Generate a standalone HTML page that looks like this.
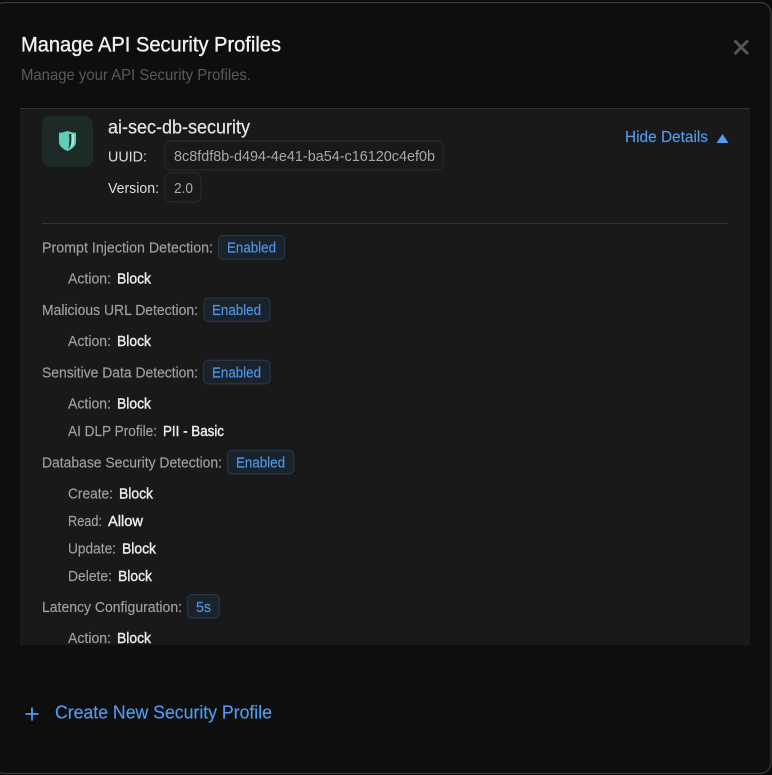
<!DOCTYPE html>
<html lang="en">
<head>
<meta charset="utf-8">
<title>Manage API Security Profiles</title>
<style>
html,body{margin:0;padding:0;background:#0b0b0b;width:772px;height:775px;overflow:hidden}
svg{display:block;position:absolute;left:0;top:0}
text{font-family:"Liberation Sans",sans-serif;font-size:15px;white-space:pre}
.l{fill:#a0a0a0;stroke:#a0a0a0;stroke-width:.15}
.b{fill:#ececec;stroke:#ececec;stroke-width:.4}
.c{fill:#4f97e8;stroke:#4f97e8;stroke-width:.15;font-size:15px}
.chip{fill:#1a222c;stroke:#263648;stroke-width:1.2}
.g{fill:#191919;stroke:#2a2a2a;stroke-width:1.2}
</style>
</head>
<body>
<svg width="772" height="775" viewBox="0 0 772 775" xmlns="http://www.w3.org/2000/svg">
<defs><clipPath id="p"><rect x="20" y="108" width="730" height="537"/></clipPath></defs>
<rect x="0" y="0" width="772" height="775" fill="#0b0b0b"/>
<rect x="-6" y="2.5" width="777" height="771" rx="11" fill="#0e0e0e" stroke="#3a3a3a" stroke-width="1.2"/>

<text x="21" y="51.5" style="font-size:21px;stroke:#f2f2f2;stroke-width:.35" fill="#f2f2f2" textLength="260" lengthAdjust="spacingAndGlyphs">Manage API Security Profiles</text>
<text x="21" y="80" style="font-size:16px" fill="#5a5a5a" textLength="230" lengthAdjust="spacingAndGlyphs">Manage your API Security Profiles.</text>
<path d="M734.5 40.5 L748 54 M748 40.5 L734.5 54" stroke="#565656" stroke-width="3" fill="none"/>

<rect x="20" y="108" width="730" height="537" fill="#191919"/>
<rect x="20" y="108" width="730" height="1" fill="#333333"/>

<rect x="42" y="116" width="51" height="51" rx="8" fill="#1c2a28"/>
<path d="M67.5 131 C70.5 132 73.5 132.7 76 132.7 V142 C76 146 72 149 67.5 151 C63 149 59 146 59 142 V132.7 C61.5 132.7 64.5 132 67.5 131 Z" fill="#5fcdb9"/>
<path d="M71 134 C72 134.3 73 134.5 74 134.6 V142 C74 144.5 72 146.8 69.5 148 C71 145 71.3 141 71 134 Z" fill="#a8e6da"/>
<path d="M69.2 134 H71.3 V141 C71.3 144 70.6 146.5 68.4 148.8 C69.6 144.5 69.6 139 69.2 134 Z" fill="#12201e"/>

<text x="108" y="133.5" style="font-size:19px;stroke:#e6e6e6;stroke-width:.2" fill="#e6e6e6" textLength="142" lengthAdjust="spacingAndGlyphs">ai-sec-db-security</text>
<text x="108" y="161.5" fill="#dddddd" textLength="39" lengthAdjust="spacingAndGlyphs">UUID:</text>
<rect x="165" y="141" width="278" height="29" rx="6" class="g"/>
<text x="174" y="161" fill="#a8a8a8" textLength="261" lengthAdjust="spacingAndGlyphs">8c8fdf8b-d494-4e41-ba54-c16120c4ef0b</text>
<text x="108" y="193" fill="#dddddd" textLength="51" lengthAdjust="spacingAndGlyphs">Version:</text>
<rect x="165" y="173" width="36" height="29" rx="6" class="g"/>
<text x="174" y="193" fill="#a8a8a8" textLength="19" lengthAdjust="spacingAndGlyphs">2.0</text>

<text x="625" y="142" style="font-size:16px;stroke:#4f9cf0;stroke-width:.15" fill="#4f9cf0" textLength="83" lengthAdjust="spacingAndGlyphs">Hide Details</text>
<path d="M722.5 134 L728.5 143 H716.5 Z" fill="#4f9cf0"/>

<rect x="42" y="223" width="686" height="1" fill="#333333"/>

<g clip-path="url(#p)">
<text class="l" x="42" y="252.5" textLength="171" lengthAdjust="spacingAndGlyphs">Prompt Injection Detection:</text>
<rect class="chip" x="218.6" y="235.6" width="66" height="23.5" rx="4.5"/>
<text class="c" x="227" y="252.5" textLength="49" lengthAdjust="spacingAndGlyphs">Enabled</text>
<text class="l" x="68" y="283.5" textLength="43" lengthAdjust="spacingAndGlyphs">Action:</text>
<text class="b" x="117" y="283.5" textLength="34" lengthAdjust="spacingAndGlyphs">Block</text>

<text class="l" x="42" y="315" textLength="156" lengthAdjust="spacingAndGlyphs">Malicious URL Detection:</text>
<rect class="chip" x="204" y="298" width="66" height="23.5" rx="4.5"/>
<text class="c" x="212" y="315" textLength="49" lengthAdjust="spacingAndGlyphs">Enabled</text>
<text class="l" x="68" y="346" textLength="43" lengthAdjust="spacingAndGlyphs">Action:</text>
<text class="b" x="117" y="346" textLength="34" lengthAdjust="spacingAndGlyphs">Block</text>

<text class="l" x="42" y="377.5" textLength="156" lengthAdjust="spacingAndGlyphs">Sensitive Data Detection:</text>
<rect class="chip" x="203.6" y="360.4" width="66.4" height="23.5" rx="4.5"/>
<text class="c" x="212" y="377.5" textLength="49" lengthAdjust="spacingAndGlyphs">Enabled</text>
<text class="l" x="68" y="408.5" textLength="43" lengthAdjust="spacingAndGlyphs">Action:</text>
<text class="b" x="117" y="408.5" textLength="34" lengthAdjust="spacingAndGlyphs">Block</text>
<text class="l" x="68" y="436" textLength="89" lengthAdjust="spacingAndGlyphs">AI DLP Profile:</text>
<text class="b" x="163" y="436" textLength="61" lengthAdjust="spacingAndGlyphs">PII - Basic</text>

<text class="l" x="42" y="467.5" textLength="180" lengthAdjust="spacingAndGlyphs">Database Security Detection:</text>
<rect class="chip" x="227.6" y="450.4" width="66" height="23.5" rx="4.5"/>
<text class="c" x="236" y="467.5" textLength="49" lengthAdjust="spacingAndGlyphs">Enabled</text>
<text class="l" x="68" y="498.5" textLength="45" lengthAdjust="spacingAndGlyphs">Create:</text>
<text class="b" x="119" y="498.5" textLength="34" lengthAdjust="spacingAndGlyphs">Block</text>
<text class="l" x="68" y="526" textLength="34" lengthAdjust="spacingAndGlyphs">Read:</text>
<text class="b" x="108" y="526" textLength="35" lengthAdjust="spacingAndGlyphs">Allow</text>
<text class="l" x="68" y="553.5" textLength="48" lengthAdjust="spacingAndGlyphs">Update:</text>
<text class="b" x="122" y="553.5" textLength="34" lengthAdjust="spacingAndGlyphs">Block</text>
<text class="l" x="68" y="581" textLength="44" lengthAdjust="spacingAndGlyphs">Delete:</text>
<text class="b" x="118" y="581" textLength="34" lengthAdjust="spacingAndGlyphs">Block</text>

<text class="l" x="42" y="612" textLength="140" lengthAdjust="spacingAndGlyphs">Latency Configuration:</text>
<rect class="chip" x="187.6" y="594.6" width="31.5" height="23.5" rx="4.5"/>
<text class="c" x="196" y="612" textLength="15" lengthAdjust="spacingAndGlyphs">5s</text>
<text class="l" x="68" y="643" textLength="43" lengthAdjust="spacingAndGlyphs">Action:</text>
<text class="b" x="117" y="643" textLength="34" lengthAdjust="spacingAndGlyphs">Block</text>
</g>

<path d="M32 707.5 V720.5 M25.5 714 H38.5" stroke="#4f9cf0" stroke-width="1.8" fill="none"/>
<text x="55" y="718.5" style="font-size:18px;stroke:#4f9cf0;stroke-width:.15" fill="#4f9cf0" textLength="217" lengthAdjust="spacingAndGlyphs">Create New Security Profile</text>
</svg>
</body>
</html>
